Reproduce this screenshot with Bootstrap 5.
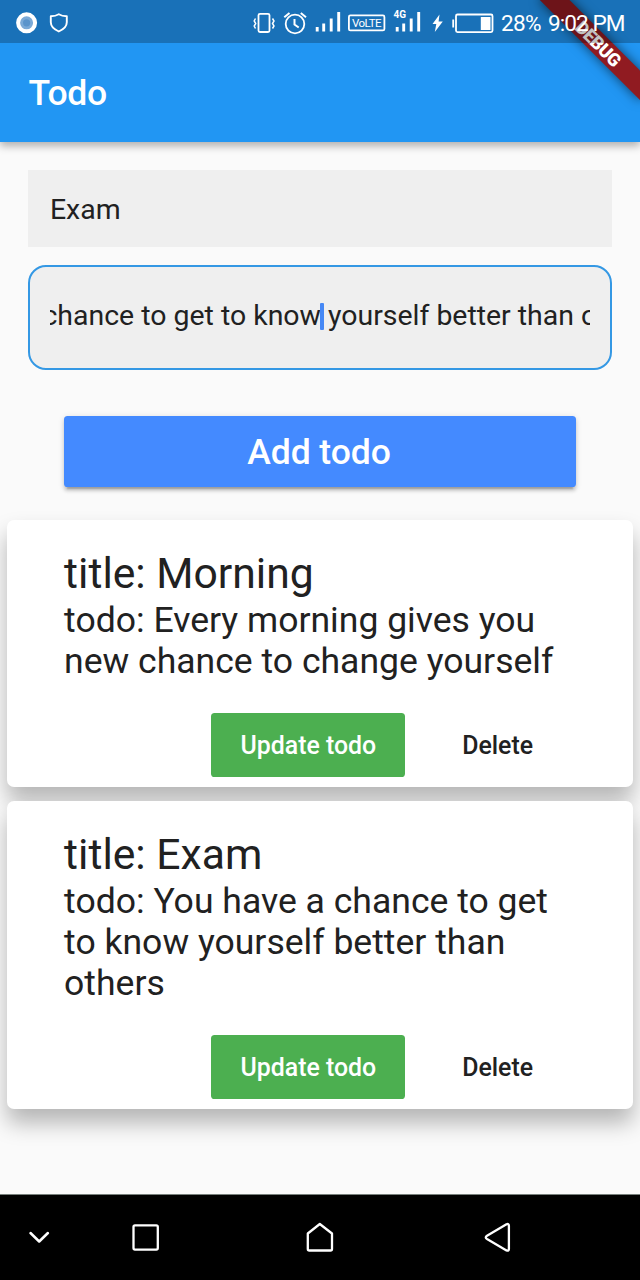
<!DOCTYPE html>
<html lang="en">
<head>
<meta charset="utf-8">
<meta name="viewport" content="width=device-width, initial-scale=1">
<title>Todo</title>
<link href="https://cdn.jsdelivr.net/npm/bootstrap@5.3.0/dist/css/bootstrap.min.css" rel="stylesheet">
<style>
  body { font-family: Roboto, "Noto Sans", sans-serif; background: #fafafa; color: #212121; }
  .screen { width: 640px; height: 1280px; }
  .top-layer { z-index: 2; background: #2196f3; box-shadow: 0 4px 8px rgba(0,0,0,.3); }
  .status { height: 42.6px; background: rgba(0,0,0,.245); font-size: 22.6px; line-height: 1; padding: 2px 15px 0 0; z-index: 2; }
  .status svg { flex: none; margin-top: -2px; }
  .pct { width: 47px; letter-spacing: -.7px; padding-top: 3px; }
  .clock { width: 77px; letter-spacing: -.95px; white-space: nowrap; padding-top: 3px; }
  .appbar { height: 99.6px; padding: 2px 28.5px 0; }
  .appbar h1 { font-size: 35.56px; font-weight: 500; letter-spacing: -.3px; }
  .ribbon { left: 526.2px; top: 32px; width: 142.2px; height: 21.4px; transform: rotate(45deg); background: #901b21; font-size: 18.1px; letter-spacing: -.5px; text-indent: 3px; font-weight: 900; line-height: 21.4px; z-index: 1; box-shadow: 0 0 12px rgba(0,0,0,.6); }
  .ribbon-clip { inset: 0; }
  .field { background: #efefef; border: 0; border-radius: 0; font-size: 28.44px; padding: 3px 21.5px 0; margin: 0 28.4px; color: #212121; }
  .field-title { height: 76.6px; margin-top: 28.2px; }
  .field-todo { height: 104.8px; margin-top: 18.1px; border: 2px solid #3498e4; border-radius: 18px; padding: 0 19.6px 2px; }
  .visible-text { height: 40px; line-height: 40px; white-space: pre; }
  .visible-text > span { margin-left: -7.5px; }
  .caret { display: inline-block; width: 3.6px; height: 27.5px; background: #4688f5; border-radius: 1px; vertical-align: -5px; margin: 0 -2.8px 0 -.8px; }
  .btn-add { height: 71.2px; margin: 46px 64px 0; padding: 3px 2px 0 0; background: #448aff; color: #fff; border: 0; border-radius: 3.6px; font-size: 35.56px; font-weight: 500; line-height: 1; letter-spacing: -.1px; box-shadow: 0 5.3px 1.8px -3.5px rgba(0,0,0,.2), 0 3.5px 3.5px rgba(0,0,0,.14), 0 1.8px 6px rgba(0,0,0,.12); }
  .todos { margin: 33.4px 7.1px 0; gap: 14px; }
  .todo { border: 0; border-radius: 7.1px; padding: 28px 57px 10.4px; box-shadow: 0 14px 22px rgba(0,0,0,.28); color: #212121; }
  .todo h2 { font-size: 42.67px; font-weight: 400; line-height: 50px; margin: 0 0 1.5px; }
  .todo p { font-size: 35.56px; line-height: 41px; margin: 0 -10px 31.100px 0; }
  .todo .btn { height: 64px; font-size: 24.9px; font-weight: 500; border: 0; border-radius: 3.6px; padding: 1px 0 0; line-height: 63px; }
  .todo .actions { margin-right: 14.3px; }
  .todo .btn-update { background: #4caf50; color: #fff; margin-right: 28.4px; width: 193.8px; }
  .todo .btn-del { color: #212121; width: 128px; }
  .sysnav { height: 86px; background: #000; border-top: 1px solid #777f7b; }
  .sysnav svg { display: block; }
</style>
</head>
<body>
<div class="screen d-flex flex-column position-relative overflow-hidden">
  <div class="top-layer position-relative">
    <div class="status d-flex align-items-center text-white position-relative">
      <svg class="me-auto" width="80" height="42" viewBox="0 0 80 42" fill="none">
        <circle cx="26.600" cy="22.800" r="8.500" fill="#7aa9d7" stroke="#fff" stroke-width="4"/><circle cx="26.600" cy="22.800" r="3.600" fill="#5b94cb"/>
        <path d="M58.800 14.200c-2.500 1.500-5 2-8 2.100v6c0 4 3 7 8 9.200 5-2.200 8-5.200 8-9.200v-6c-3-.1-5.500-.6-8-2.100z" stroke="#fff" stroke-width="1.900" stroke-linejoin="round"/>
      </svg>
      <svg width="251" height="42" viewBox="250 0 251 42" fill="none" stroke="#fff" stroke-width="1.800">
        <rect x="258.500" y="13.800" width="11" height="18.200" rx="1.500"/>
        <path d="M255.500 18.500l-1.300 2.500 1.500 2.500-1.500 2.500 1.300 2.500M272.500 18.500l1.500 2.500-1.500 2.500 1.500 2.500-1.500 2.500" stroke-width="1.500"/>
        <circle cx="295" cy="24" r="9.300"/><path d="M294.500 19v5.500l4.200 3M284.300 17.200l5.200-4.300M306 17.200l-5.200-4.300" stroke-width="2"/>
        <path d="M317.200 31.500v-4.500M323.700 31.500v-8M331.200 31.500v-13M338.700 31.500V12" stroke-width="2.900"/>
        <rect x="348.900" y="15.400" width="35.500" height="15" rx="1.500"/>
        <path d="M397.200 31.500v-4.500M403.700 31.500v-8M411.200 31.500v-13M418.700 31.500V12" stroke-width="2.900"/>
        <path d="M439.500 14.500l-7 9.500h3.800l-1.500 8 8-10.500h-4.200z" fill="#fff" stroke="none"/>
        <rect x="456" y="14.500" width="36.500" height="17.600" rx="1.500"/><path d="M453.200 19.500v8"/><rect x="480.800" y="17" width="9.700" height="13" fill="#fff" stroke="none"/>
        <g fill="#fff" stroke="none" font-family="Roboto, sans-serif"><text x="352" y="27.300" font-size="11.500" textLength="29.500">VoLTE</text><text x="393.500" y="17.800" font-size="10" font-weight="700" textLength="12.500">4G</text></g>
      </svg>
      <span class="pct">28%</span><span class="clock">9:02 PM</span>
    </div>
    <header class="appbar d-flex align-items-center text-white">
      <h1 class="m-0">Todo</h1>
    </header>
    <div class="ribbon-clip position-absolute overflow-hidden"><div class="ribbon position-absolute text-center text-white">DEBUG</div></div>
  </div>

  <div class="field field-title d-flex align-items-center">Exam</div>
  <div class="field field-todo d-flex align-items-center"><div class="visible-text overflow-hidden w-100"><span>chance to get to know</span><i class="caret"></i> yourself better than others</div></div>
  <button class="btn btn-add" type="button">Add todo</button>

  <main class="todos d-flex flex-column">
    <article class="card todo">
      <h2>title: Morning</h2>
      <p>todo: Every morning gives you<br>new chance to change yourself</p>
      <div class="actions d-flex justify-content-end"><button class="btn btn-update" type="button">Update todo</button><button class="btn btn-del" type="button">Delete</button></div>
    </article>
    <article class="card todo">
      <h2>title: Exam</h2>
      <p>todo: You have a chance to get<br>to know yourself better than<br>others</p>
      <div class="actions d-flex justify-content-end"><button class="btn btn-update" type="button">Update todo</button><button class="btn btn-del" type="button">Delete</button></div>
    </article>
  </main>

  <nav class="sysnav mt-auto">
    <svg width="640" height="84" viewBox="0 1195 640 84" fill="none" stroke="#fff" stroke-width="2.300" stroke-linejoin="round" stroke-linecap="round">
      <path d="M30.500 1233l8.700 8.500 8.700-8.500" stroke-width="2.500"/>
      <rect x="133.500" y="1225.300" width="24.300" height="24.300" rx="1.500"/>
      <path d="M307.800 1233.500l12-9.500 12.200 9.500v15.500a1.500 1.500 0 0 1-1.500 1.500h-21.200a1.500 1.500 0 0 1-1.500-1.500z"/>
      <path d="M506.500 1224.300l-19.500 11.500q-2.500 1.600 0 3.200l19.500 11.400q2.400 1 2.400-1.500v-23.100q0-2.500-2.400-1.500z"/>
    </svg>
  </nav>
</div>
<script src="https://cdn.jsdelivr.net/npm/bootstrap@5.3.0/dist/js/bootstrap.bundle.min.js"></script>
</body>
</html>
